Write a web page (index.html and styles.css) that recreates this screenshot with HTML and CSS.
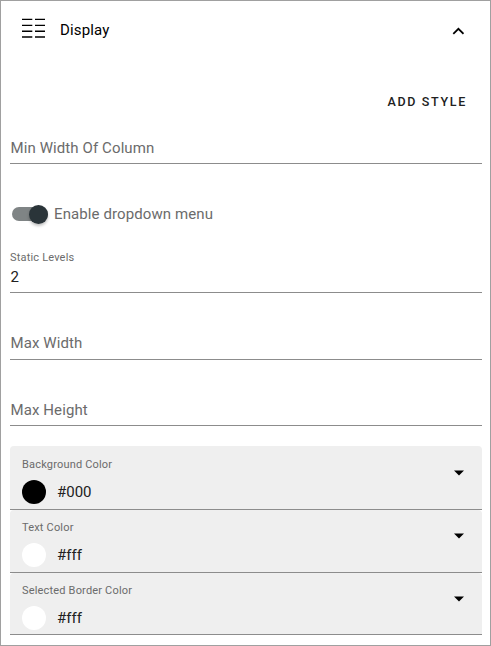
FILE: index.html
```html
<!DOCTYPE html>
<html lang="en">
<head>
<meta charset="utf-8">
<title>Display</title>
<link rel="stylesheet" href="styles.css">
</head>
<body>
<main class="panel">
  <header class="header">
    <svg class="columns-icon" width="24" height="20" viewBox="0 0 24 20" fill="#000"><path d="M0 .8h10.3v1.3H0zM13 .8h10v1.3H13zM0 6.8h10.3v1.3H0zM13 6.8h10v1.3H13zM0 12.6h10.3v1.4H0zM13 12.6h10v1.4H13zM0 18.2h10.3v1.6H0zM13 18.2h10v1.6H13z"/></svg>
    <h1 class="title">Display</h1>
    <svg class="chevron" width="12" height="8" viewBox="0 0 12 8" fill="none" stroke="#000" stroke-width="1.8"><path d="M1.3 6.8 6.4 1.8l5.1 5"/></svg>
  </header>
  <div class="actions"><button class="add">ADD STYLE</button></div>
  <div class="field first"><span class="placeholder">Min Width Of Column</span></div>
  <div class="toggle-row">
    <span class="track"><span class="thumb"></span></span>
    <span class="toggle-label">Enable dropdown menu</span>
  </div>
  <div class="field filled"><span class="caption">Static Levels</span><span class="value">2</span></div>
  <div class="field wide"><span class="placeholder">Max Width</span></div>
  <div class="field last"><span class="placeholder">Max Height</span></div>
  <section class="colors">
    <div class="select tall">
      <div class="info"><span class="caption">Background Color</span><div class="choice"><span class="swatch black"></span><span class="value">#000</span></div></div>
      <svg class="arrow" width="10" height="6" viewBox="0 0 10 6"><path d="M0 .4h10L5 5.4z"/></svg>
    </div>
    <div class="select">
      <div class="info"><span class="caption">Text Color</span><div class="choice"><span class="swatch"></span><span class="value">#fff</span></div></div>
      <svg class="arrow" width="10" height="6" viewBox="0 0 10 6"><path d="M0 .4h10L5 5.4z"/></svg>
    </div>
    <div class="select short">
      <div class="info"><span class="caption">Selected Border Color</span><div class="choice"><span class="swatch"></span><span class="value">#fff</span></div></div>
      <svg class="arrow" width="10" height="6" viewBox="0 0 10 6"><path d="M0 .4h10L5 5.4z"/></svg>
    </div>
  </section>
</main>
</body>
</html>
```
FILE: styles.css
```css
* { box-sizing: border-box; }
body { margin: 0; font-family: Roboto, sans-serif; color: #212121; background: #fff; }
.panel { width: 491px; height: 646px; border: 1px solid #a0a0a0; padding: 0 8px 0 9px; overflow: hidden; }
.header { height: 58px; display: flex; align-items: center; padding: 0 18px 0 12px; }
.columns-icon { margin-top: -4px; }
.title { margin: 0 auto 0 14px; font-size: 15px; font-weight: 400; letter-spacing: .14px; line-height: 20px; color: #000; }
.chevron { margin-top: 2px; }
.actions { height: 71px; display: flex; justify-content: flex-end; align-items: flex-start; padding: 34px 15px 0 0; }
.add { border: 0; padding: 0; background: none; color: #212121; font: 500 12.5px/18px Roboto, sans-serif; letter-spacing: 1.68px; }
.field { display: flex; flex-direction: column; justify-content: flex-end; border-bottom: 1px solid #8c8c8c; line-height: 20px; font-size: 15px; }
.placeholder, .toggle-label { color: #6b6b6b; font-size: 15px; letter-spacing: .1px; }
.placeholder { padding: 0 0 6px .5px; }
.first .placeholder, .last .placeholder { padding-bottom: 5px; }
.first { height: 34px; }
.toggle-row { height: 100px; display: flex; align-items: center; gap: 6px; padding-left: 2px; }
.track { width: 36px; height: 14px; display: flex; align-items: center; justify-content: flex-end; border-radius: 7px; background: #7f8485; }
.thumb { width: 19px; height: 19px; border-radius: 50%; background: #2a3439; box-shadow: 0 2px 3px rgba(0,0,0,.25); }
.filled { height: 29px; padding-bottom: 5px; }
.filled .value { padding-left: .5px; }
.caption { color: #6b6b6b; font-size: 11px; line-height: 14px; letter-spacing: .18px; }
.filled .caption { margin-bottom: 2px; }
.value { font-size: 15px; line-height: 20px; }
.wide { height: 67px; }
.last { height: 66px; }
.colors { margin-top: 20px; }
.select { height: 63px; display: flex; justify-content: space-between; padding: 11px 18px 0 12px; background: #efefef; border-bottom: 1px solid #8c8c8c; border-radius: 4px 4px 0 0; }
.tall { height: 64px; padding-top: 12px; }
.short { height: 62px; }
.info { display: flex; flex-direction: column; gap: 8px; }
.choice { display: flex; align-items: center; gap: 11px; }
.swatch { width: 24px; height: 24px; border-radius: 50%; background: #fff; }
.black { background: #000; }
.arrow { margin-top: 12px; }
```
